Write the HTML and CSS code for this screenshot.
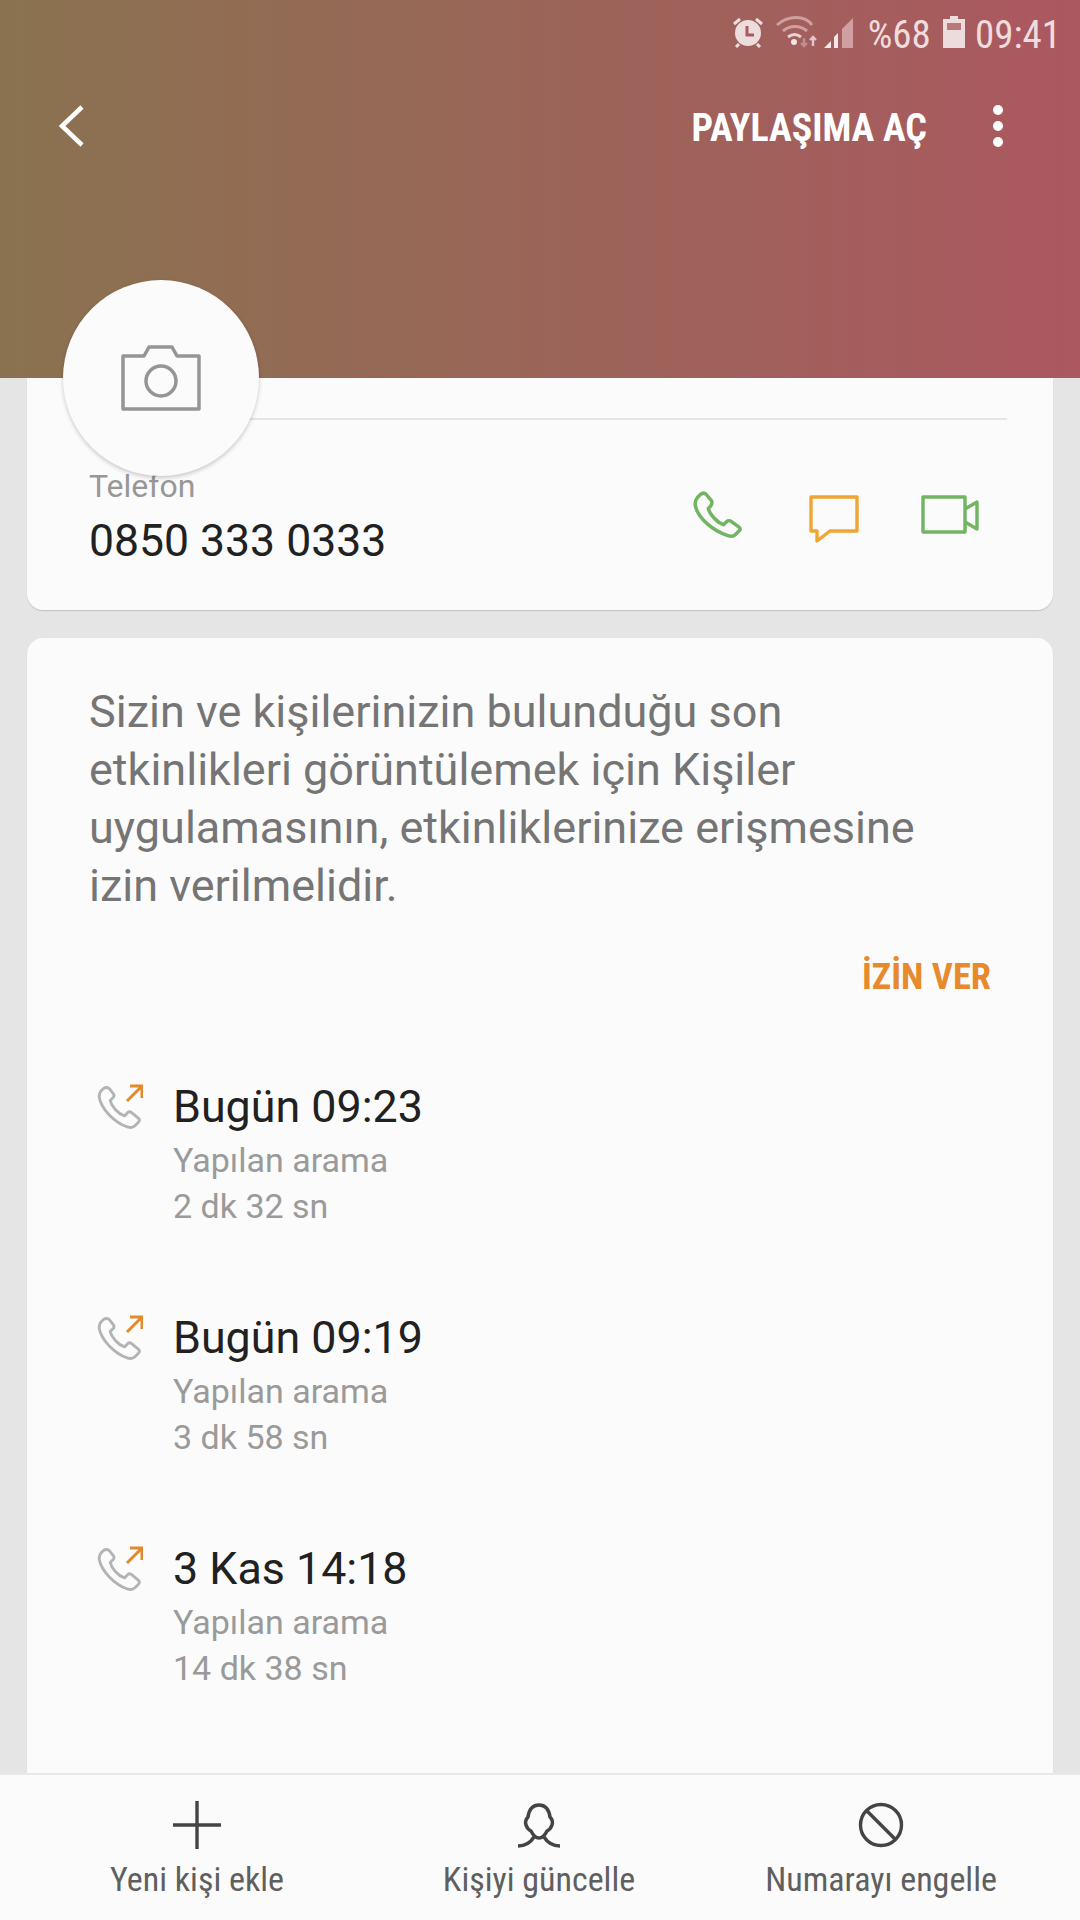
FILE: index.html
```html
<!DOCTYPE html>
<html lang="tr">
<head>
<meta charset="utf-8">
<title>Kişi</title>
<link rel="stylesheet" href="styles.css">
</head>
<body>
<div class="page">
  <header class="hero">
    <div class="status">
      <svg class="st-alarm" viewBox="0 0 32 32" width="32" height="32"><circle cx="16" cy="17" r="13" fill="#ecdcdc"/><path d="M2 8l6-5M30 8l-6-5M7 28l-3 3M25 28l3 3" stroke="#ecdcdc" stroke-width="3" fill="none"/><path d="M15 10v9h7" stroke="#a85a60" stroke-width="3" fill="none"/></svg>
      <svg class="st-wifi" viewBox="0 0 44 32" width="44" height="32"><path d="M2 9C13-1 30-1 37 9" stroke="#cf9fa2" stroke-width="3" fill="none"/><path d="M8 15c7-6 17-6 24 0" stroke="#cf9fa2" stroke-width="3" fill="none"/><path d="M13 21c4-3 9-3 13 0" stroke="#e8d4d5" stroke-width="3" fill="none"/><circle cx="19" cy="26" r="3" fill="#f0e4e4"/><path d="M29 22v8M26 27l3 3 3-3" stroke="#c08e91" stroke-width="2.4" fill="none"/><path d="M38 30v-9M35 24l3-3 3 3" stroke="#e0c6c8" stroke-width="2.4" fill="none"/></svg>
      <svg class="st-signal" viewBox="0 0 32 32" width="32" height="32"><path d="M1 32l7-7v7z" fill="#f3e8e8"/><path d="M11 32V21l4-4v15z" fill="#f3e8e8"/><path d="M19 32V13l11-11v30z" fill="#cf9fa2"/></svg>
      <span class="st-text st-pct">%68</span>
      <svg class="st-batt" viewBox="0 0 22 32" width="22" height="32"><path d="M7 0h8v3h7v29H0V3h7z" fill="#ecdcdc"/><rect x="4" y="7" width="14" height="7" fill="#b9787c"/></svg>
      <span class="st-text st-clock">09:41</span>
    </div>
    <div class="toolbar">
      <svg class="back" viewBox="0 0 30 44" width="30" height="44"><path d="M26 3L6 22l20 19" stroke="#fff" stroke-width="4.5" fill="none"/></svg>
      <span class="spacer"></span>
      <span class="share">PAYLAŞIMA AÇ</span>
      <span class="dots"><i></i><i></i><i></i></span>
    </div>
  </header>

  <div class="avatar">
    <svg viewBox="0 0 80 68" width="80" height="68"><path d="M2 12h21l5-9h23l5 9h22v53H2z" fill="none" stroke="#959595" stroke-width="3.500" stroke-linejoin="round"/><circle cx="40" cy="37" r="15" fill="none" stroke="#959595" stroke-width="3.500"/></svg>
  </div>

  <main class="content">
    <section class="card card-phone">
      <div class="rule"></div>
      <div class="phone-row">
        <div class="phone-info">
          <div class="label">Telefon</div>
          <div class="number">0850 333 0333</div>
        </div>
        <div class="actions">
          <svg class="act-call" viewBox="0 0 46 46" width="50" height="50"><path d="M8 3c2-1.500 4-1 5 0l5 6c1 2 .5 3-1 5l-2 2c1 5 8 13 14 15l3-3c1-1 3-1 4 0l7 5c2 1.500 1.500 3 0 4l-3 3c-2 2-4 2-7 1C20 37 5 25 3 13c-.5-3 .5-5 2-7z" fill="none" stroke="#71b562" stroke-width="3.200" stroke-linejoin="round"/></svg>
          <svg class="act-chat" viewBox="0 0 50 48" width="50" height="48"><path d="M2 2h46v34H21L8 46V36H2z" fill="none" stroke="#f0a632" stroke-width="3.400" stroke-linejoin="round"/></svg>
          <svg class="act-video" viewBox="0 0 58 40" width="58" height="40"><path d="M2 2h42v35H2zM44 14l12-7v27l-12-7" fill="none" stroke="#71b562" stroke-width="3.400" stroke-linejoin="round"/></svg>
        </div>
      </div>
    </section>

    <section class="card card-log">
      <p class="notice">Sizin ve kişilerinizin bulunduğu son etkinlikleri görüntülemek için Kişiler uygulamasının, etkinliklerinize erişmesine izin verilmelidir.</p>
      <div class="allow-row"><span class="allow">İZİN VER</span></div>
      <ul class="calls">
        <li class="call">
          <svg class="call-icon" viewBox="0 0 46 46" width="46" height="46"><path transform="scale(1.1)" d="M6 4c2-1.500 3.500-1 5 0l4 5c1 2 .5 3-1 4l-2 2c1 5 7 12 13 14l3-3c1-1 2-1 3.500 0l6 5c1.500 1.500 1 3 0 4l-3 3c-2 2-4 2-7 1C16 35 4 23 2 12c0-3 1-5 2-6z" fill="none" stroke="#b3b3b3" stroke-width="2.600" stroke-linejoin="round"/><path d="M30 17L44 3M33 2h12v12" fill="none" stroke="#e28a2c" stroke-width="3"/></svg>
          <div><div class="call-time">Bugün 09:23</div><div class="call-sub">Yapılan arama</div><div class="call-sub">2 dk 32 sn</div></div>
        </li>
        <li class="call">
          <svg class="call-icon" viewBox="0 0 46 46" width="46" height="46"><path transform="scale(1.1)" d="M6 4c2-1.500 3.500-1 5 0l4 5c1 2 .5 3-1 4l-2 2c1 5 7 12 13 14l3-3c1-1 2-1 3.500 0l6 5c1.500 1.500 1 3 0 4l-3 3c-2 2-4 2-7 1C16 35 4 23 2 12c0-3 1-5 2-6z" fill="none" stroke="#b3b3b3" stroke-width="2.600" stroke-linejoin="round"/><path d="M30 17L44 3M33 2h12v12" fill="none" stroke="#e28a2c" stroke-width="3"/></svg>
          <div><div class="call-time">Bugün 09:19</div><div class="call-sub">Yapılan arama</div><div class="call-sub">3 dk 58 sn</div></div>
        </li>
        <li class="call">
          <svg class="call-icon" viewBox="0 0 46 46" width="46" height="46"><path transform="scale(1.1)" d="M6 4c2-1.500 3.500-1 5 0l4 5c1 2 .5 3-1 4l-2 2c1 5 7 12 13 14l3-3c1-1 2-1 3.500 0l6 5c1.500 1.500 1 3 0 4l-3 3c-2 2-4 2-7 1C16 35 4 23 2 12c0-3 1-5 2-6z" fill="none" stroke="#b3b3b3" stroke-width="2.600" stroke-linejoin="round"/><path d="M30 17L44 3M33 2h12v12" fill="none" stroke="#e28a2c" stroke-width="3"/></svg>
          <div><div class="call-time">3 Kas 14:18</div><div class="call-sub">Yapılan arama</div><div class="call-sub">14 dk 38 sn</div></div>
        </li>
      </ul>
    </section>
  </main>

  <nav class="bottom">
    <div class="tab">
      <svg viewBox="0 0 50 50" width="50" height="50"><path d="M25 1v48M1 25h48" stroke="#444" stroke-width="3.400"/></svg>
      <span>Yeni kişi ekle</span>
    </div>
    <div class="tab">
      <svg viewBox="0 0 46 50" width="46" height="50"><path d="M23 5C30 5 33 10 34 17C36 19 37 22 36 25C35 28 33 30 31 31C29 35 26 38 23 38C20 38 17 35 15 31C13 30 11 28 10 25C9 22 10 19 12 17C13 10 16 5 23 5z" fill="none" stroke="#444" stroke-width="3.500"/><path d="M18 37C15 42 9 46 2 46M28 37C31 42 37 46 44 46" fill="none" stroke="#444" stroke-width="3.500"/></svg>
      <span>Kişiyi güncelle</span>
    </div>
    <div class="tab">
      <svg viewBox="0 0 46 50" width="46" height="50"><circle cx="23" cy="25" r="20.500" fill="none" stroke="#444" stroke-width="3.400"/><path d="M9 11l28 28" stroke="#444" stroke-width="3.400"/></svg>
      <span>Numarayı engelle</span>
    </div>
  </nav>
</div>
</body>
</html>
```

FILE: styles.css
```css
* { box-sizing: border-box; margin: 0; padding: 0; }
html, body { width: 1080px; height: 1920px; overflow: hidden; }
body { font-family: Roboto, "Noto Sans", sans-serif; background: #e5e5e5; }
.page { position: relative; width: 1080px; height: 1920px; display: flex; flex-direction: column; }

.hero { height: 378px; flex: none; background: linear-gradient(90deg, #8a7250 0%, #ab5860 100%); padding: 16px 19px 0 56px; color: #fff; }
.status { display: flex; justify-content: flex-end; align-items: center; height: 32px; color: #f0dcdc; }
.st-text { font-size: 39px; font-stretch: 75%; line-height: 32px; padding-top: 6px; }
.st-wifi { margin-left: 11px; }
.st-signal { margin-left: 4px; }
.st-pct { margin-left: 13px; }
.st-batt { margin-left: 12px; }
.st-clock { margin-left: 10px; }
.toolbar { display: flex; align-items: center; margin-top: 50px; height: 56px; }
.spacer { flex: 1; }
.share { font-size: 38px; font-weight: 700; font-stretch: 75%; padding-top: 4px; }
.dots { display: flex; flex-direction: column; gap: 6px; margin: 0 58px 0 66px; }
.dots i { width: 10px; height: 10px; border-radius: 50%; background: #fff; display: block; }

.avatar { position: absolute; left: 63px; top: 280px; width: 196px; height: 196px; border-radius: 50%; background: #fbfbfb; box-shadow: 0 2px 4px rgba(0,0,0,.2); display: flex; align-items: center; justify-content: center; z-index: 2; }

.content { flex: 1; min-height: 0; overflow: hidden; padding: 0 27px; display: flex; flex-direction: column; gap: 28px; }
.card { background: #fbfbfb; border-radius: 0 0 16px 16px; box-shadow: 0 1px 1px rgba(0,0,0,.16); }
.card-phone { flex: none; height: 232px; padding: 40px 46px 0 62px; }
.rule { height: 2px; background: #e6e6e6; }
.phone-row { display: flex; justify-content: space-between; align-items: flex-start; margin-top: 46px; }
.label { font-size: 32px; line-height: 40px; color: #979797; }
.number { font-size: 44.5px; line-height: 52px; color: #212121; margin-top: 9px; }
.actions { display: flex; align-items: flex-start; margin-top: 29px; padding-right: 28px; }
.act-call { margin-top: -4px; }
.act-chat { margin-left: 67px; }
.act-video { margin-left: 62px; }

.card-log { flex: 1; min-height: 0; border-radius: 16px 16px 0 0; padding: 45px 62px 0; }
.notice { font-size: 45px; line-height: 58px; color: #757575; }
.allow-row { display: flex; justify-content: flex-end; margin-top: 40px; }
.allow { font-size: 36.5px; font-weight: 700; font-stretch: 75%; color: #e78a2e; }
.calls { list-style: none; margin-top: 77px; display: flex; flex-direction: column; gap: 77px; }
.call { display: flex; gap: 30px; padding-left: 8px; }
.call-icon { flex: none; margin-top: 9px; }
.call-time { font-size: 44.8px; line-height: 63px; color: #212121; }
.call-sub { font-size: 34px; line-height: 45.500px; color: #9a9a9a; }

.bottom { flex: none; height: 147px; background: #fbfbfb; border-top: 2px solid #e8e8e8; display: grid; grid-template-columns: 1fr 1fr 1fr; padding: 25px 28px 0 26px; position: relative; }
.tab { display: flex; flex-direction: column; align-items: center; gap: 9px; font-size: 34px; font-stretch: 75%; color: #5f5f5f; }
```
